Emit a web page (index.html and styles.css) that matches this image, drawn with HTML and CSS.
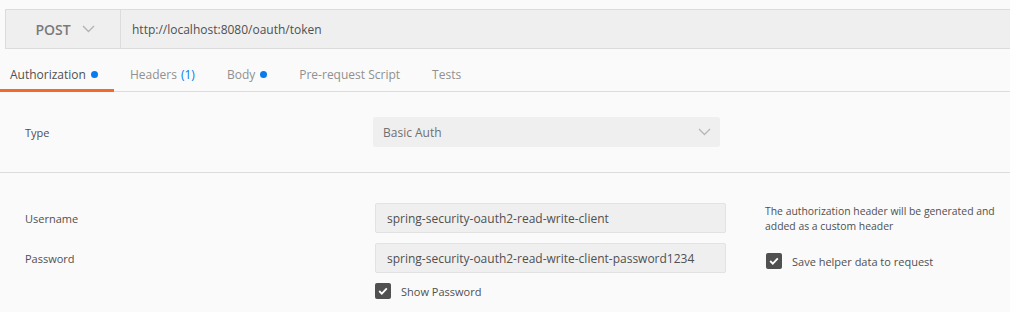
FILE: index.html
```html
<!DOCTYPE html>
<html>
<head>
<meta charset="utf-8">
<link rel="stylesheet" href="styles.css">
</head>
<body>
<div class="urlbar">
  <div class="method">POST
    <svg class="chev" width="13" height="8" viewBox="0 0 13 8"><path d="M1 1l5.5 5.5L12 1" fill="none" stroke="#b3b3b3" stroke-width="1.4"/></svg>
  </div>
  <div class="url">http://localhost:8080/oauth/token</div>
</div>
<div class="tabs">
  <div class="tab active">Authorization <span class="dot"></span></div>
  <div class="tab">Headers <span class="count">(1)</span></div>
  <div class="tab">Body <span class="dot"></span></div>
  <div class="tab">Pre-request Script</div>
  <div class="tab">Tests</div>
</div>
<div class="section type-section">
  <div class="label">Type</div>
  <div class="select">Basic Auth
    <svg width="13" height="8" viewBox="0 0 13 8"><path d="M1 1l5.5 5.5L12 1" fill="none" stroke="#b8b8b8" stroke-width="1.4"/></svg>
  </div>
</div>
<div class="section cred-section">
  <div class="fields">
    <div class="row"><div class="label">Username</div><div class="input">spring-security-oauth2-read-write-client</div></div>
    <div class="row"><div class="label">Password</div><div class="input">spring-security-oauth2-read-write-client-password1234</div></div>
    <div class="row check-row"><div class="label"></div><label class="check"><span class="box"><svg width="10" height="8" viewBox="0 0 10 8"><path d="M1.2 4l2.6 2.6L8.8 1.4" fill="none" stroke="#fff" stroke-width="1.8"/></svg></span>Show Password</label></div>
  </div>
  <div class="help">
    <p>The authorization header will be generated and added as a custom header</p>
    <label class="check"><span class="box"><svg width="10" height="8" viewBox="0 0 10 8"><path d="M1.2 4l2.6 2.6L8.8 1.4" fill="none" stroke="#fff" stroke-width="1.8"/></svg></span>Save helper data to request</label>
  </div>
</div>
</body>
</html>
```

FILE: styles.css
```css
html, body {
  margin: 0;
  padding: 0;
  background: #fafafa;
  font-family: "Open Sans", "Noto Sans", sans-serif;
  font-size: 11px;
  color: #505050;
}

.urlbar {
  display: flex;
  margin: 9px 0 0 5px;
  height: 38px;
  border: 1px solid #dcdcdc;
  border-right: none;
  background: #efefef;
}

.method {
  width: 115px;
  box-sizing: border-box;
  border-right: 1px solid #dcdcdc;
  display: flex;
  align-items: center;
  justify-content: center;
  gap: 11px;
  font-size: 14px;
  font-weight: 600;
  color: #7a7a7a;
  padding-left: 4px;
}

.url {
  display: flex;
  align-items: center;
  padding-left: 11px;
  font-size: 12px;
  color: #505050;
}

.tabs {
  display: flex;
  height: 42px;
  border-bottom: 1px solid #dcdcdc;
}

.tab {
  display: flex;
  align-items: center;
  gap: 5px;
  padding: 8px 16px 0;
  font-size: 12px;
  color: #909090;
  box-sizing: border-box;
}

.tab:first-child {
  padding-left: 10px;
}

.tab.active {
  color: #505050;
  border-bottom: 3px solid #f26b2a;
  margin-bottom: -1px;
  padding-top: 11px;
  width: 114px;
}

.dot {
  width: 7px;
  height: 7px;
  border-radius: 50%;
  background: #097bed;
}

.count {
  color: #097bed;
  margin-left: -1px;
}

.section {
  padding-left: 25px;
}

.type-section {
  display: flex;
  align-items: center;
  height: 80px;
  border-bottom: 1px solid #dcdcdc;
}

.type-section .label {
  width: 348px;
}

.select {
  width: 347px;
  height: 30px;
  box-sizing: border-box;
  background: #efefef;
  border-radius: 3px;
  display: flex;
  align-items: center;
  justify-content: space-between;
  padding: 0 9px 0 10px;
  font-size: 12px;
  color: #707070;
}

.cred-section {
  display: flex;
  padding-top: 30px;
}

.fields {
  display: flex;
  flex-direction: column;
  gap: 10px;
}

.row {
  display: flex;
  align-items: center;
}

.row .label {
  width: 350px;
}

.input {
  width: 351px;
  height: 30px;
  box-sizing: border-box;
  background: #efefef;
  border: 1px solid #e2e2e2;
  border-radius: 2px;
  display: flex;
  align-items: center;
  padding-left: 11px;
  font-size: 12px;
  color: #505050;
}

.check {
  display: flex;
  align-items: center;
  gap: 10px;
  color: #505050;
}

.box {
  width: 16px;
  height: 16px;
  border-radius: 2px;
  background: #505050;
  display: flex;
  align-items: center;
  justify-content: center;
}

.help {
  margin-left: 39px;
  padding-top: 1px;
  width: 250px;
}

.help p {
  margin: 0 0 19px;
  font-size: 10.4px;
  line-height: 15px;
  color: #505050;
}

.help .check {
  padding-left: 1px;
}
```
